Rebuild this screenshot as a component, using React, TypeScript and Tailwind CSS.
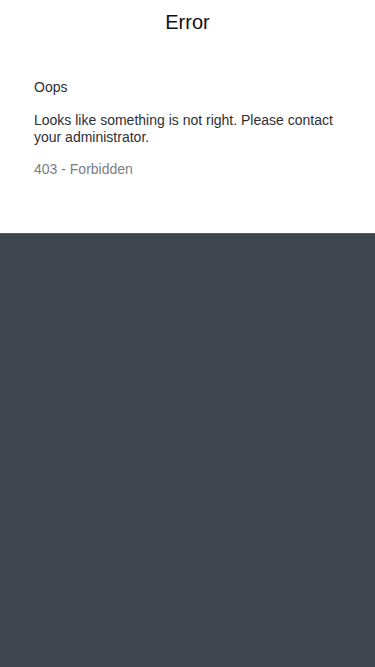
export default function App() {
  return (
    <div className="min-h-[667px] flex flex-col bg-[#3f464d]" style={{ fontFamily: '"Liberation Sans", Arial, sans-serif' }}>
      <div className="h-[233px] bg-white">
        <div className="h-[44px] flex items-center justify-center text-[20px] text-[#111]">Error</div>
        <div className="px-[34px] pt-[35px] text-[14px] leading-[17px] text-[#2d2f33]">
          <p>Oops</p>
          <p className="mt-[16px]">Looks like something is not right. Please contact your administrator.</p>
          <p className="mt-[15px] text-[#7b7e82]">403 - Forbidden</p>
        </div>
      </div>
      <div className="flex-1 border-t border-[#555c63] bg-[#3f464d]" />
    </div>
  );
}
